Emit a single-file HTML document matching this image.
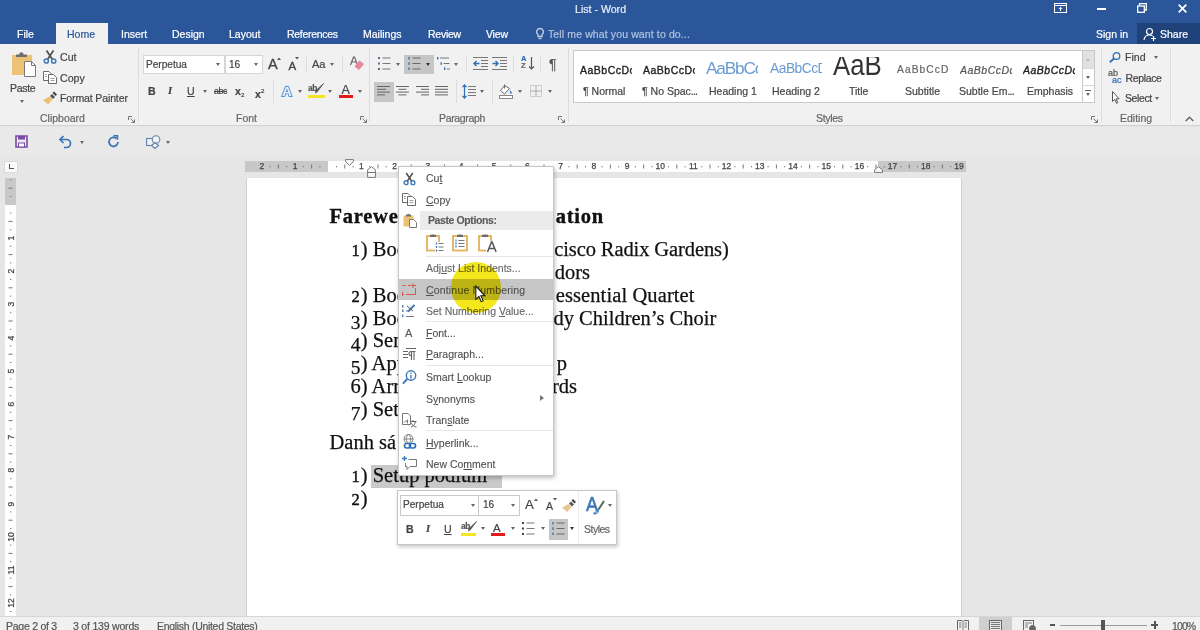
<!DOCTYPE html>
<html lang="en">
<head>
<meta charset="utf-8">
<title>List - Word</title>
<style>
*{box-sizing:border-box;margin:0;padding:0}
html,body{width:1200px;height:630px;overflow:hidden;background:#e6e6e6;font-family:"Liberation Sans",sans-serif;font-size:10.5px;color:#444}
#app{position:relative;width:1200px;height:630px;overflow:hidden;will-change:transform}
.a{position:absolute}
.t{position:absolute;white-space:nowrap;line-height:14px;-webkit-text-stroke:.2px currentColor}
svg{position:absolute;overflow:visible}
/* title + tabs */
#title{left:0;top:0;width:1200px;height:44px;background:#2b579a}
#title .t{color:#fff;font-size:10.5px}
#hometab{left:56px;top:23px;width:52px;height:22px;background:#f1f1f1}
#share{left:1137px;top:23px;width:63px;height:21px;background:#1e4279}
/* ribbon */
#ribbon{left:0;top:44px;width:1200px;height:82px;background:#f1f1f1;border-bottom:1px solid #d2d2d2}
.sep{position:absolute;width:1px;background:#dcdcdc}
.lbl{color:#666;font-size:10.5px}
.dd{position:absolute;width:0;height:0;margin-left:.5px;border-left:2.500px solid transparent;border-right:2.500px solid transparent;border-top:3px solid #666}
.hl{position:absolute;background:#c6c6c6}
.box{position:absolute;background:#fff;border:1px solid #c6c6c6}
/* doc */
#page{left:246px;top:178px;width:716px;height:439px;background:#fff;border-left:1px solid #d0d0d0;border-right:1px solid #d0d0d0}
.doc{position:absolute;white-space:nowrap;font-family:"Liberation Serif",serif;color:#111;font-size:20.5px;line-height:24px;-webkit-text-stroke:.25px #111}
#hr .rn{position:absolute;top:0;width:20px;text-align:center;font-size:8.500px;line-height:13px;color:#444;-webkit-text-stroke:.25px #444}
.vn{position:absolute;left:0px;width:21px;height:14px;text-align:center;font-size:8.500px;line-height:14px;color:#444;-webkit-text-stroke:.25px #444;transform:rotate(-90deg)}
.doc.r{left:auto}
.os{display:inline-block;width:10.250px;text-align:center}
.doc.b{font-weight:bold;font-size:20.5px;letter-spacing:.75px;-webkit-text-stroke:.35px #111}
/* status */
#status{left:0;top:615.500px;width:1200px;height:15px;background:#f1f1f1;border-top:1px solid #d6d6d6}
#status .t{color:#555;font-size:10.5px;top:2px}
/* menu */
#menu{left:398px;top:166px;width:156px;height:310px;background:#fff;border:1px solid #c6c6c6;box-shadow:1px 2px 4px rgba(0,0,0,.25)}
#menu .t{left:27px;color:#505050;font-size:10.5px;-webkit-text-stroke:.12px currentColor}
#menu .t u{text-decoration-thickness:1px;text-underline-offset:1px}
#menu .ms{position:absolute;left:27px;width:127px;height:1px;background:#e6e6e6}
#mini{left:397px;top:490px;width:220px;height:55px;background:#fff;border:1px solid #c6c6c6;box-shadow:1px 2px 4px rgba(0,0,0,.22)}
</style>
</head>
<body>
<div id="app">
<div id="title" class="a">
 <div class="t" style="left:575px;top:2px;font-size:10.6px;color:#e8eef7">List - Word</div>
 <div id="share" class="a"></div>
 <div id="hometab" class="a"></div>
 <div class="t" style="left:17px;top:27px">File</div>
 <div class="t" style="left:67px;top:27px;color:#2b579a">Home</div>
 <div class="t" style="left:121px;top:27px">Insert</div>
 <div class="t" style="left:172px;top:27px">Design</div>
 <div class="t" style="left:229px;top:27px">Layout</div>
 <div class="t" style="left:287px;top:27px;letter-spacing:-.3px">References</div>
 <div class="t" style="left:363px;top:27px">Mailings</div>
 <div class="t" style="left:428px;top:27px;letter-spacing:-.25px">Review</div>
 <div class="t" style="left:486px;top:27px;letter-spacing:-.2px">View</div>
 <div class="t" style="left:548px;top:27px;color:#b2c3df;font-size:10.5px;letter-spacing:.12px">Tell me what you want to do...</div>
 <div class="t" style="left:1096px;top:27px">Sign in</div>
 <div class="t" style="left:1160px;top:27px">Share</div>
 <svg style="left:533.500px;top:26.500px" width="12" height="15" viewBox="0 0 12 15" fill="none" stroke="#c3d0e6" stroke-width="1.300"><path d="M6 1.5a3.3 3.3 0 0 0-2 6v2h4v-2a3.3 3.3 0 0 0-2-6z"/><path d="M4.5 11.5h3"/></svg>
 <svg style="left:1143px;top:27px" width="15" height="15" viewBox="0 0 15 15" fill="none" stroke="#fff" stroke-width="1.2"><circle cx="6.5" cy="4.5" r="3"/><path d="M1 13c.5-3.5 2.5-5 5.5-5 1.2 0 2.2.3 3 .8"/><path d="M10.5 9v5M8 11.5h5"/></svg>
 <svg style="left:1054px;top:3px" width="13" height="10" viewBox="0 0 13 10" fill="none" stroke="#fff" stroke-width="1"><rect x=".5" y=".5" width="12" height="9"/><path d="M.5 2.5h12"/><path d="M6.5 8V4.5M4.8 6l1.7-1.7L8.2 6" /></svg>
 <div class="a" style="left:1097px;top:8px;width:9px;height:2px;background:#fff"></div>
 <svg style="left:1137px;top:3px" width="10" height="10" viewBox="0 0 10 10" fill="none" stroke="#fff" stroke-width="1.3"><path d="M2.5 2.5V.7h6.8v6.3H7.5"/><rect x=".7" y="3" width="6.6" height="6.3"/></svg>
 <svg style="left:1178px;top:4px" width="9" height="9" viewBox="0 0 9 9" fill="none" stroke="#fff" stroke-width="1.7"><path d="M.7.7l7.6 7.6M8.3.7L.7 8.3"/></svg>
</div>

<div id="ribbon" class="a">
 <!-- coordinates inside are relative to ribbon top=44 -->
 <!-- Clipboard -->
 <svg style="left:11px;top:7px" width="26" height="27" viewBox="0 0 26 27">
  <rect x="1" y="4" width="20" height="20" fill="#eec274"/>
  <path d="M5 6V3.5h3.2a2.2 2.2 0 0 1 4.400 0H16V6z" fill="#6e6e6e"/>
  <path d="M13.500 10.500h7l4 4V25.500h-11z" fill="#fff" stroke="#7a7a7a" stroke-width="1"/>
  <path d="M20.500 10.500v4h4" fill="none" stroke="#7a7a7a" stroke-width="1"/>
 </svg>
 <div class="t" style="left:10px;top:37px;font-size:10.5px;letter-spacing:-.3px">Paste</div>
 <div class="dd" style="left:19px;top:56px"></div>
 <svg style="left:43px;top:6px" width="14" height="14" viewBox="0 0 14 14" fill="none">
  <path d="M3.500 0.500L9.500 9.500M10.500 0.500L4.500 9.500" stroke="#505050" stroke-width="1.700"/>
  <circle cx="3.300" cy="11" r="2.100" stroke="#3f78b8" stroke-width="1.500"/><circle cx="10.700" cy="11" r="2.100" stroke="#3f78b8" stroke-width="1.500"/>
 </svg>
 <div class="t" style="left:60px;top:6px;font-size:10.6px">Cut</div>
 <svg style="left:43px;top:27px" width="14" height="13" viewBox="0 0 14 13" fill="#fff" stroke="#6a6a6a" stroke-width="1">
  <path d="M0.500 0.500h5.500l2 2v7h-7.500z"/><path d="M5.500 3.500h5l3 3v6h-8z"/><path d="M2 3.500h2M2 5.500h2M7.500 7.500h4M7.500 9.500h4" stroke="#8a8a8a" stroke-width=".8"/>
 </svg>
 <div class="t" style="left:60px;top:27px;font-size:10.6px">Copy</div>
 <svg style="left:43px;top:47px" width="15" height="14" viewBox="0 0 15 14">
  <path d="M9 3l3 3-2 2-3-3z" fill="#555"/><path d="M11 .5l3 3-1.500 1.500-3-3z" fill="#444"/>
  <path d="M6.500 5.500l3 3-4.500 5-5-4.500z" fill="#eec274"/>
 </svg>
 <div class="t" style="left:60px;top:47px;font-size:10.5px;letter-spacing:-.12px">Format Painter</div>
 <div class="t lbl" style="left:40px;top:67px">Clipboard</div>
 <svg class="lch" style="left:128px;top:72px" width="7" height="7" viewBox="0 0 7 7" fill="none" stroke="#777" stroke-width="1"><path d="M.5 4V.5H4"/><path d="M2.500 2.500l4 4M6.500 3.500v3h-3"/></svg>
 <div class="sep" style="left:138px;top:4px;height:74px"></div>
 <!-- Font -->
 <div class="box" style="left:143px;top:11px;width:82px;height:19px;border-color:#d6d6d6"></div>
 <div class="box" style="left:225px;top:11px;width:38px;height:19px;border-color:#d6d6d6"></div>
 <div class="t" style="left:146px;top:14px;font-size:10.1px">Perpetua</div>
 <div class="t" style="left:229px;top:14px;font-size:10.1px">16</div>
 <div class="dd" style="left:215px;top:19px"></div>
 <div class="dd" style="left:253px;top:19px"></div>
 <div class="t" style="left:268px;top:12px;font-size:14.500px;line-height:16px;-webkit-text-stroke:.35px #444">A</div>
 <svg style="left:277px;top:13px" width="4" height="3" viewBox="0 0 4 3"><path d="M0 3L2 .5 4 3z" fill="#555"/></svg>
 <div class="t" style="left:288.500px;top:14.500px;font-size:11.500px;line-height:14px;-webkit-text-stroke:.35px #444">A</div>
 <svg style="left:295px;top:13px" width="4" height="3" viewBox="0 0 4 3"><path d="M0 0L2 2.500 4 0z" fill="#555"/></svg>
 <div class="sep" style="left:306px;top:12px;height:17px"></div>
 <div class="t" style="left:312px;top:13px;font-size:11.0px">Aa</div>
 <div class="dd" style="left:329px;top:19px"></div>
 <div class="sep" style="left:342px;top:12px;height:17px"></div>
 <svg style="left:349px;top:12px" width="16" height="15" viewBox="0 0 16 15">
  <path d="M1.500 9L4.500 1h1L8.500 9M2.700 6h4.600" fill="none" stroke="#666" stroke-width="1.200"/>
  <path d="M10.500 4.500l4.500 3.500-5 6-4.500-3.500z" fill="#e8849c"/>
 </svg>
 <div class="t" style="left:148px;top:40px;font-size:10.6px;font-weight:bold;color:#444">B</div>
 <div class="t" style="left:168px;top:40px;font-size:10.6px;font-style:italic;font-weight:bold;font-family:'Liberation Serif',serif;color:#444">I</div>
 <div class="t" style="left:187px;top:40px;font-size:10.6px;text-decoration:underline;color:#444">U</div>
 <div class="dd" style="left:202px;top:46px"></div>
 <div class="t" style="left:214px;top:40px;font-size:8.8px;text-decoration:line-through;letter-spacing:-0.44px">abc</div>
 <div class="t" style="left:235px;top:40px;font-size:10.6px;font-weight:bold">x<span style="font-size:6.2px;vertical-align:-2px;font-weight:normal">2</span></div>
 <div class="t" style="left:255px;top:40px;font-size:10.6px;font-weight:bold">x<span style="font-size:6.2px;vertical-align:5px;font-weight:normal">2</span></div>
 <div class="sep" style="left:273px;top:36px;height:23px"></div>
 <div class="t" style="left:282px;top:38.500px;font-size:13.500px;line-height:18px;font-weight:bold;color:#eef4fb;-webkit-text-stroke:2px #5a93d6;paint-order:stroke fill">A</div>
 <div class="dd" style="left:297px;top:46px"></div>
 <div class="t" style="left:308px;top:37px;font-size:8.4px;font-weight:bold;letter-spacing:-0.35px;color:#555">ab</div>
 <svg style="left:314px;top:39px" width="11" height="11" viewBox="0 0 11 11"><path d="M9.500 0.500L3.500 8.500l-2 1.500.500-2.500z" fill="#555" stroke="#555" stroke-width=".8"/></svg>
 <div class="a" style="left:308px;top:51px;width:17px;height:3px;background:#f2e526"></div>
 <div class="dd" style="left:327px;top:46px"></div>
 <div class="t" style="left:341.500px;top:39px;font-size:12.500px;color:#444">A</div>
 <div class="a" style="left:339px;top:51px;width:14px;height:3px;background:#e21a1a"></div>
 <div class="dd" style="left:357px;top:46px"></div>
 <div class="t lbl" style="left:236px;top:67px">Font</div>
 <svg class="lch" style="left:360px;top:72px" width="7" height="7" viewBox="0 0 7 7" fill="none" stroke="#777" stroke-width="1"><path d="M.5 4V.5H4"/><path d="M2.500 2.500l4 4M6.500 3.500v3h-3"/></svg>
 <div class="sep" style="left:369px;top:4px;height:74px"></div>
 <!-- Paragraph row 1 (relative to top=44) -->
 <svg style="left:378px;top:13px" width="13" height="13" viewBox="0 0 13 13"><g fill="#5a6f8c"><rect x="0" y="0" width="2" height="2"/><rect x="0" y="5.500" width="2" height="2"/><rect x="0" y="11" width="2" height="2"/></g><path d="M4.500 1h8M4.500 6.500h8M4.500 12h8" stroke="#777" stroke-width="1"/></svg>
 <div class="dd" style="left:395px;top:19px"></div>
 <div class="hl" style="left:404px;top:11px;width:30px;height:19px"></div>
 <svg style="left:408px;top:13px" width="13" height="13" viewBox="0 0 13 13"><g fill="#3f6fae"><rect x=".3" y="0" width="1.400" height="2.500"/><rect x=".3" y="5.300" width="1.400" height="2.500"/><rect x=".3" y="10.500" width="1.400" height="2.500"/></g><path d="M4.500 1h8M4.500 6.500h8M4.500 12h8" stroke="#666" stroke-width="1"/></svg>
 <div class="dd" style="left:425px;top:19px;border-top-color:#333"></div>
 <svg style="left:437px;top:13px" width="15" height="14" viewBox="0 0 15 14"><g fill="#3f6fae"><rect x="0" y="0" width="1.400" height="2.500"/><rect x="3.500" y="5.300" width="1.400" height="2.500"/><rect x="7" y="10.500" width="1.400" height="2.500"/></g><path d="M3 1h9M6.500 6.500h6M10 12h3" stroke="#777" stroke-width="1"/></svg>
 <div class="dd" style="left:453px;top:19px"></div>
 <div class="sep" style="left:466px;top:12px;height:17px"></div>
 <svg style="left:473px;top:13px" width="15" height="13" viewBox="0 0 15 13"><path d="M0 .5h15M8 3.500h7M8 6.500h7M8 9.500h7M0 12.500h15" stroke="#777" stroke-width="1"/><path d="M6.500 6.500H1M3.500 4L1 6.500 3.500 9" fill="none" stroke="#2f6fb7" stroke-width="1.400"/></svg>
 <svg style="left:492px;top:13px" width="15" height="13" viewBox="0 0 15 13"><path d="M0 .5h15M8 3.500h7M8 6.500h7M8 9.500h7M0 12.500h15" stroke="#777" stroke-width="1"/><path d="M0.500 6.500H6M3.500 4L6 6.500 3.500 9" fill="none" stroke="#2f6fb7" stroke-width="1.400"/></svg>
 <div class="sep" style="left:513px;top:12px;height:17px"></div>
 <div class="t" style="left:521px;top:11px;font-size:7.5px;line-height:8px;color:#2f6fb7;font-weight:bold">A</div>
 <div class="t" style="left:521px;top:18px;font-size:7.5px;line-height:8px;color:#666;font-weight:bold">Z</div>
 <svg style="left:528px;top:13px" width="7" height="13" viewBox="0 0 7 13"><path d="M3.500 0V12M1 9.500L3.500 12 6 9.500" fill="none" stroke="#555" stroke-width="1.200"/></svg>
 <div class="sep" style="left:540px;top:12px;height:17px"></div>
 <div class="t" style="left:549px;top:12px;font-size:14px;line-height:16px;color:#555">¶</div>
 <!-- row 2 -->
 <div class="hl" style="left:374px;top:38px;width:20px;height:20px"></div>
 <svg style="left:377px;top:42px" width="14" height="10" viewBox="0 0 14 10"><path d="M0 .5h13M0 3.300h9M0 6.100h13M0 8.900h8" stroke="#666" stroke-width="1"/></svg>
 <svg style="left:396px;top:42px" width="14" height="10" viewBox="0 0 14 10"><path d="M0 .5h13M2.500 3.300h8M0 6.100h13M2.500 8.900h8" stroke="#666" stroke-width="1"/></svg>
 <svg style="left:416px;top:42px" width="14" height="10" viewBox="0 0 14 10"><path d="M0 .5h13M5 3.300h8M0 6.100h13M5 8.900h8" stroke="#666" stroke-width="1"/></svg>
 <svg style="left:435px;top:42px" width="14" height="10" viewBox="0 0 14 10"><path d="M0 .5h13M0 3.300h13M0 6.100h13M0 8.900h13" stroke="#666" stroke-width="1"/></svg>
 <div class="sep" style="left:456px;top:36px;height:23px"></div>
 <svg style="left:462px;top:40px" width="15" height="15" viewBox="0 0 15 15"><path d="M6 2.500h8M6 5.500h8M6 8.500h8M6 11.500h8" stroke="#777" stroke-width="1"/><path d="M2.500 1V14M.5 3.200L2.500 1l2 2.200M.5 11.800l2 2.200 2-2.200" fill="none" stroke="#2f6fb7" stroke-width="1.200"/></svg>
 <div class="dd" style="left:479px;top:46px"></div>
 <div class="sep" style="left:492px;top:36px;height:23px"></div>
 <svg style="left:499px;top:40px" width="15" height="15" viewBox="0 0 15 15"><path d="M5.500 1.500L1.500 6.500l4 3.500 5-5.500z" fill="#fff" stroke="#666" stroke-width="1"/><path d="M5.500 .5v4" stroke="#666" stroke-width="1"/><path d="M11 6c1.500 1.500 2.500 3 1 4-1.200-.5-1.500-2-1-4z" fill="#4a7fc0"/><rect x=".5" y="11.500" width="13" height="3" fill="#fff" stroke="#888" stroke-width="1"/></svg>
 <div class="dd" style="left:517px;top:46px"></div>
 <svg style="left:530px;top:41px" width="12" height="12" viewBox="0 0 12 12"><rect x=".5" y=".5" width="11" height="11" fill="none" stroke="#aaa" stroke-width="1" stroke-dasharray="1 1"/><path d="M6 .5v11M.5 6h11" stroke="#aaa" stroke-width="1"/></svg>
 <div class="dd" style="left:547px;top:46px"></div>
 <div class="t lbl" style="left:439px;top:67px;letter-spacing:-.35px">Paragraph</div>
 <svg class="lch" style="left:558px;top:72px" width="7" height="7" viewBox="0 0 7 7" fill="none" stroke="#777" stroke-width="1"><path d="M.5 4V.5H4"/><path d="M2.500 2.500l4 4M6.500 3.500v3h-3"/></svg>
 <div class="sep" style="left:568px;top:4px;height:74px"></div>
 <!-- Styles gallery (relative to top=44) -->
 <div class="box" style="left:573px;top:6px;width:522px;height:53px;border-color:#c9c9c9"></div>
 <div class="a" style="left:1082px;top:7px;width:12px;height:17px;background:#e1e1e1"></div>
 <div class="a" style="left:1082px;top:6px;width:1px;height:52px;background:#c9c9c9"></div>
 <div class="a" style="left:1082px;top:24px;width:12px;height:1px;background:#d8d8d8"></div>
 <div class="a" style="left:1082px;top:41px;width:12px;height:1px;background:#d8d8d8"></div>
 <div class="dd" style="left:1085px;top:14px;transform:rotate(180deg);border-top-color:#bbb"></div>
 <div class="dd" style="left:1085px;top:32px"></div>
 <div class="a" style="left:1085px;top:46px;width:6px;height:1px;background:#666"></div>
 <div class="dd" style="left:1085px;top:49px"></div>
 <div class="a" id="gal" style="left:574px;top:13px;width:508px;height:44px;overflow:hidden">
  <div class="a" style="left:6px;top:0;width:52px;height:44px;overflow:hidden"><div class="t" style="left:0;top:6px;font-size:10.5px;color:#222;-webkit-text-stroke:.35px #222;letter-spacing:.5px">AaBbCcDc</div></div>
  <div class="a" style="left:69px;top:0;width:52px;height:44px;overflow:hidden"><div class="t" style="left:0;top:6px;font-size:10.5px;color:#222;-webkit-text-stroke:.35px #222;letter-spacing:.5px">AaBbCcDc</div></div>
  <div class="a" style="left:132px;top:0;width:52px;height:44px;overflow:hidden"><div class="t" style="left:0;top:0px;font-size:17.2px;line-height:22px;color:#6a9bd0;-webkit-text-stroke:0;letter-spacing:-1.150px">AaBbCcD</div></div>
  <div class="a" style="left:196px;top:0;width:52px;height:44px;overflow:hidden"><div class="t" style="left:0;top:2.500px;font-size:13.8px;line-height:18px;color:#6a9bd0;-webkit-text-stroke:0;letter-spacing:-.5px">AaBbCcDc</div></div>
  <div class="a" style="left:259px;top:0;width:52px;height:44px;overflow:hidden"><div class="t" style="left:0;top:-11.600px;font-size:29px;line-height:40px;color:#333;-webkit-text-stroke:0;transform:scaleX(.89);transform-origin:0 0">AaB</div></div>
  <div class="a" style="left:323px;top:0;width:52px;height:44px;overflow:hidden"><div class="t" style="left:0;top:6px;font-size:10.2px;color:#666;letter-spacing:1.1px">AaBbCcDc</div></div>
  <div class="a" style="left:386px;top:0;width:52px;height:44px;overflow:hidden"><div class="t" style="left:0;top:6px;font-size:10.5px;color:#555;font-style:italic;letter-spacing:.5px">AaBbCcDc</div></div>
  <div class="a" style="left:449px;top:0;width:52px;height:44px;overflow:hidden"><div class="t" style="left:0;top:6px;font-size:10.5px;color:#222;font-style:italic;-webkit-text-stroke:.35px #222;letter-spacing:.5px">AaBbCcDc</div></div>
 </div>
 <div class="t" style="left:583px;top:40px">¶ Normal</div>
 <div class="t" style="left:642px;top:40px">¶ No Spac<span style="letter-spacing:-.8px">...</span></div>
 <div class="t" style="left:709px;top:40px">Heading 1</div>
 <div class="t" style="left:772px;top:40px">Heading 2</div>
 <div class="t" style="left:849px;top:40px">Title</div>
 <div class="t" style="left:905px;top:40px">Subtitle</div>
 <div class="t" style="left:959px;top:40px">Subtle Em<span style="letter-spacing:-.8px">...</span></div>
 <div class="t" style="left:1027px;top:40px">Emphasis</div>
 <div class="t lbl" style="left:816px;top:67px;letter-spacing:-.3px">Styles</div>
 <svg class="lch" style="left:1091px;top:72px" width="7" height="7" viewBox="0 0 7 7" fill="none" stroke="#777" stroke-width="1"><path d="M.5 4V.5H4"/><path d="M2.500 2.500l4 4M6.500 3.500v3h-3"/></svg>
 <div class="sep" style="left:1101px;top:4px;height:74px"></div>
 <!-- Editing -->
 <svg style="left:1109px;top:8px" width="12" height="11" viewBox="0 0 12 11" fill="none" stroke="#2f6fb7"><circle cx="7.500" cy="4" r="3.300" stroke-width="1.300"/><path d="M5 6.500L.8 10.200" stroke-width="1.800"/></svg>
 <div class="t" style="left:1125px;top:6px;font-size:10.6px">Find</div>
 <div class="dd" style="left:1153px;top:12px"></div>
 <div class="t" style="left:1108px;top:25px;font-size:9px;line-height:9px;color:#555">ab</div>
 <div class="t" style="left:1112px;top:32px;font-size:9px;line-height:9px;color:#2f6fb7">ac</div>
 <div class="t" style="left:1125.500px;top:27px;font-size:10.5px;letter-spacing:-.35px">Replace</div>
 <svg style="left:1112px;top:47px" width="8" height="13" viewBox="0 0 8 13"><path d="M.5.5v10l2.300-2.200 1.700 4 1.300-.6-1.700-3.900h3z" fill="#fff" stroke="#555" stroke-width="1"/></svg>
 <div class="t" style="left:1125px;top:47px;font-size:10.5px;letter-spacing:-.4px">Select</div>
 <div class="dd" style="left:1154.500px;top:53px"></div>
 <div class="t lbl" style="left:1120px;top:67px">Editing</div>
 <div class="sep" style="left:1170px;top:4px;height:74px"></div>
 <svg style="left:1185px;top:72px" width="9" height="6" viewBox="0 0 9 6"><path d="M.7 5L4.500 1.200 8.300 5" fill="none" stroke="#666" stroke-width="1.500"/></svg>


</div>

<!-- QAT -->
<div class="a" style="left:0;top:127px;width:1200px;height:29px;background:#e9e9e9"></div>
<svg style="left:15px;top:135px" width="13" height="13" viewBox="0 0 13 13"><path d="M1 1h11v11H1z" fill="none" stroke="#7b4aa6" stroke-width="1.600"/><rect x="3" y="1" width="7" height="3.500" fill="#7b4aa6"/><rect x="3.500" y="8" width="6" height="4" fill="#fff" stroke="#7b4aa6" stroke-width="1"/></svg>
<svg style="left:58px;top:135px" width="15" height="13" viewBox="0 0 15 13" fill="none" stroke="#3a72b8" stroke-width="1.700"><path d="M2 4.500h6.500a4 4 0 0 1 0 8H6"/><path d="M5.500 1L2 4.500 5.500 8"/></svg>
<div class="dd" style="left:79px;top:141px"></div>
<svg style="left:107px;top:135px" width="13" height="13" viewBox="0 0 13 13" fill="none" stroke="#3a72b8" stroke-width="1.700"><path d="M9.500 3.500A4.500 4.500 0 1 0 11 7"/><path d="M6.500 .8h4v4" stroke-width="1.500"/></svg>
<svg style="left:146px;top:135px" width="16" height="14" viewBox="0 0 16 14" fill="#f3f3f3" stroke="#5d7fa8" stroke-width="1.100"><rect x=".6" y="3.500" width="8" height="7"/><circle cx="10" cy="4.500" r="3.800"/><path d="M9 7.500l3.500 3-3.500 3-3.500-3z"/></svg>
<div class="dd" style="left:165px;top:141px"></div>
<!-- horizontal ruler -->
<div class="a" style="left:245px;top:161px;width:721px;height:11px;background:#c8c8c8"></div>
<div class="a" style="left:328px;top:161px;width:550px;height:11px;background:#fefefe"></div>
<svg style="left:245px;top:161px" width="721" height="11" fill="#777"><rect x="24.6" y="5" width="1" height="1.300"/><rect x="32.9" y="3.500" width="1" height="4"/><rect x="41.2" y="5" width="1" height="1.300"/><rect x="57.8" y="5" width="1" height="1.300"/><rect x="66.1" y="3.500" width="1" height="4"/><rect x="74.4" y="5" width="1" height="1.300"/><rect x="91.0" y="5" width="1" height="1.300"/><rect x="99.3" y="3.500" width="1" height="4"/><rect x="107.6" y="5" width="1" height="1.300"/><rect x="124.2" y="5" width="1" height="1.300"/><rect x="132.5" y="3.500" width="1" height="4"/><rect x="140.8" y="5" width="1" height="1.300"/><rect x="157.4" y="5" width="1" height="1.300"/><rect x="165.7" y="3.500" width="1" height="4"/><rect x="174.0" y="5" width="1" height="1.300"/><rect x="190.6" y="5" width="1" height="1.300"/><rect x="198.9" y="3.500" width="1" height="4"/><rect x="207.2" y="5" width="1" height="1.300"/><rect x="223.8" y="5" width="1" height="1.300"/><rect x="232.1" y="3.500" width="1" height="4"/><rect x="240.4" y="5" width="1" height="1.300"/><rect x="257.0" y="5" width="1" height="1.300"/><rect x="265.3" y="3.500" width="1" height="4"/><rect x="273.6" y="5" width="1" height="1.300"/><rect x="290.2" y="5" width="1" height="1.300"/><rect x="298.5" y="3.500" width="1" height="4"/><rect x="306.8" y="5" width="1" height="1.300"/><rect x="323.4" y="5" width="1" height="1.300"/><rect x="331.7" y="3.500" width="1" height="4"/><rect x="340.0" y="5" width="1" height="1.300"/><rect x="356.6" y="5" width="1" height="1.300"/><rect x="364.9" y="3.500" width="1" height="4"/><rect x="373.2" y="5" width="1" height="1.300"/><rect x="389.8" y="5" width="1" height="1.300"/><rect x="398.1" y="3.500" width="1" height="4"/><rect x="406.4" y="5" width="1" height="1.300"/><rect x="423.0" y="5" width="1" height="1.300"/><rect x="431.3" y="3.500" width="1" height="4"/><rect x="439.6" y="5" width="1" height="1.300"/><rect x="456.2" y="5" width="1" height="1.300"/><rect x="464.5" y="3.500" width="1" height="4"/><rect x="472.8" y="5" width="1" height="1.300"/><rect x="489.4" y="5" width="1" height="1.300"/><rect x="497.7" y="3.500" width="1" height="4"/><rect x="506.0" y="5" width="1" height="1.300"/><rect x="522.6" y="5" width="1" height="1.300"/><rect x="530.9" y="3.500" width="1" height="4"/><rect x="539.2" y="5" width="1" height="1.300"/><rect x="555.8" y="5" width="1" height="1.300"/><rect x="564.1" y="3.500" width="1" height="4"/><rect x="572.4" y="5" width="1" height="1.300"/><rect x="589.0" y="5" width="1" height="1.300"/><rect x="597.3" y="3.500" width="1" height="4"/><rect x="605.6" y="5" width="1" height="1.300"/><rect x="622.2" y="5" width="1" height="1.300"/><rect x="630.5" y="3.500" width="1" height="4"/><rect x="638.8" y="5" width="1" height="1.300"/><rect x="655.4" y="5" width="1" height="1.300"/><rect x="663.7" y="3.500" width="1" height="4"/><rect x="672.0" y="5" width="1" height="1.300"/><rect x="688.6" y="5" width="1" height="1.300"/><rect x="696.9" y="3.500" width="1" height="4"/><rect x="705.2" y="5" width="1" height="1.300"/></svg>
<div class="a" id="hr" style="left:0;top:160px;width:1200px;height:13px"><div class="rn" style="left:251.8px">2</div><div class="rn" style="left:285.0px">1</div><div class="rn" style="left:351.4px">1</div><div class="rn" style="left:384.6px">2</div><div class="rn" style="left:417.8px">3</div><div class="rn" style="left:451.0px">4</div><div class="rn" style="left:484.2px">5</div><div class="rn" style="left:517.4px">6</div><div class="rn" style="left:550.6px">7</div><div class="rn" style="left:583.8px">8</div><div class="rn" style="left:617.0px">9</div><div class="rn" style="left:650.2px">10</div><div class="rn" style="left:683.4px">11</div><div class="rn" style="left:716.6px">12</div><div class="rn" style="left:749.8px">13</div><div class="rn" style="left:783.0px">14</div><div class="rn" style="left:816.2px">15</div><div class="rn" style="left:849.4px">16</div><div class="rn" style="left:882.6px">17</div><div class="rn" style="left:915.8px">18</div><div class="rn" style="left:949.0px">19</div></div>
<svg style="left:344.500px;top:159px" width="9" height="7" viewBox="0 0 9 7"><path d="M.6.6h7.800v2L4.500 6.400.6 2.600z" fill="#fbfbfb" stroke="#777" stroke-width="1"/></svg>
<svg style="left:367px;top:166px" width="9" height="12" viewBox="0 0 9 12"><path d="M.6 11.400V3.800L4.500.6l3.900 3.200v7.600z" fill="#fbfbfb" stroke="#777" stroke-width="1"/><path d="M.6 6.500h7.800" stroke="#777"/></svg>
<svg style="left:873.500px;top:165.500px" width="9" height="7" viewBox="0 0 9 7"><path d="M.6 6.400V3.800L4.500.6l3.900 3.200v2.600z" fill="#fbfbfb" stroke="#777" stroke-width="1"/></svg>
<div class="a" style="left:4px;top:161px;width:14px;height:12px;background:#fbfbfb;border:1px solid #d9d9d9"></div>
<div class="a" style="left:9px;top:164px;width:5px;height:5px;border-left:1.500px solid #555;border-bottom:1.500px solid #555"></div>
<div class="a" style="left:5px;top:178px;width:11px;height:439px;background:#fefefe"></div>
<div class="a" style="left:5px;top:178px;width:11px;height:26.8px;background:#c8c8c8"></div>
<svg style="left:5px;top:178px" width="11" height="439" fill="#777"><rect y="1.4" x="5" width="1.300" height="1"/><rect y="9.7" x="3.500" width="4" height="1"/><rect y="18.0" x="5" width="1.300" height="1"/><rect y="34.6" x="5" width="1.300" height="1"/><rect y="42.9" x="3.500" width="4" height="1"/><rect y="51.2" x="5" width="1.300" height="1"/><rect y="67.8" x="5" width="1.300" height="1"/><rect y="76.1" x="3.500" width="4" height="1"/><rect y="84.4" x="5" width="1.300" height="1"/><rect y="101.0" x="5" width="1.300" height="1"/><rect y="109.3" x="3.500" width="4" height="1"/><rect y="117.6" x="5" width="1.300" height="1"/><rect y="134.2" x="5" width="1.300" height="1"/><rect y="142.5" x="3.500" width="4" height="1"/><rect y="150.8" x="5" width="1.300" height="1"/><rect y="167.4" x="5" width="1.300" height="1"/><rect y="175.7" x="3.500" width="4" height="1"/><rect y="184.0" x="5" width="1.300" height="1"/><rect y="200.6" x="5" width="1.300" height="1"/><rect y="208.9" x="3.500" width="4" height="1"/><rect y="217.2" x="5" width="1.300" height="1"/><rect y="233.8" x="5" width="1.300" height="1"/><rect y="242.1" x="3.500" width="4" height="1"/><rect y="250.4" x="5" width="1.300" height="1"/><rect y="267.0" x="5" width="1.300" height="1"/><rect y="275.3" x="3.500" width="4" height="1"/><rect y="283.6" x="5" width="1.300" height="1"/><rect y="300.2" x="5" width="1.300" height="1"/><rect y="308.5" x="3.500" width="4" height="1"/><rect y="316.8" x="5" width="1.300" height="1"/><rect y="333.4" x="5" width="1.300" height="1"/><rect y="341.7" x="3.500" width="4" height="1"/><rect y="350.0" x="5" width="1.300" height="1"/><rect y="366.6" x="5" width="1.300" height="1"/><rect y="374.9" x="3.500" width="4" height="1"/><rect y="383.2" x="5" width="1.300" height="1"/><rect y="399.8" x="5" width="1.300" height="1"/><rect y="408.1" x="3.500" width="4" height="1"/><rect y="416.4" x="5" width="1.300" height="1"/><rect y="433.0" x="5" width="1.300" height="1"/></svg>
<div class="vn" style="top:231.0px">1</div><div class="vn" style="top:264.2px">2</div><div class="vn" style="top:297.4px">3</div><div class="vn" style="top:330.6px">4</div><div class="vn" style="top:363.8px">5</div><div class="vn" style="top:397.0px">6</div><div class="vn" style="top:430.2px">7</div><div class="vn" style="top:463.4px">8</div><div class="vn" style="top:496.6px">9</div><div class="vn" style="top:529.8px">10</div><div class="vn" style="top:563.0px">11</div><div class="vn" style="top:596.2px">12</div>

<div id="page" class="a"></div>
<div class="a" style="left:371px;top:465px;width:130.500px;height:22.500px;background:#c9c9c9"></div>
<div class="doc b" style="left:329.500px;top:203.800px">Farewell</div>
<div class="doc b r" style="right:596.200px;top:203.800px">ation</div>
<div class="doc" style="left:350.500px;top:236.800px"><span class="os" style="font-size:16.500px;letter-spacing:0;-webkit-text-stroke:.45px #111">1</span>) Book</div><div class="doc r" style="right:471.300px;top:236.800px;letter-spacing:-.1px">cisco Radix Gardens)</div>
<div class="doc r" style="right:610px;top:259.700px">dors</div>
<div class="doc" style="left:350.500px;top:282.600px"><span class="os" style="font-size:16.500px;letter-spacing:0;-webkit-text-stroke:.45px #111">2</span>) Book</div><div class="doc r" style="right:505.400px;top:282.600px;letter-spacing:.1px">essential Quartet</div>
<div class="doc" style="left:350.500px;top:305.500px"><span class="os" style="position:relative;top:4px;font-size:19.500px">3</span>) Book</div><div class="doc r" style="right:483.700px;top:305.500px">dy Children’s Choir</div>
<div class="doc" style="left:350.500px;top:328.400px"><span class="os" style="position:relative;top:4px;font-size:19.500px">4</span>) Send</div>
<div class="doc" style="left:350.500px;top:351.300px"><span class="os" style="position:relative;top:4px;font-size:19.500px">5</span>) App</div><div class="doc r" style="right:633px;top:351.300px">p</div>
<div class="doc" style="left:350.500px;top:374.200px"><span class="os">6</span>) Arr</div><div class="doc r" style="right:623px;top:374.200px">rds</div>
<div class="doc" style="left:350.500px;top:397.100px"><span class="os" style="position:relative;top:4px;font-size:19.500px">7</span>) Set</div>
<div class="doc" style="left:329.500px;top:430px">Danh sá</div>
<div class="doc" style="left:350.500px;top:463.100px"><span class="os" style="font-size:16.500px;letter-spacing:0;-webkit-text-stroke:.45px #111">1</span>) Setup podium</div>
<div class="doc" style="left:350.500px;top:486px"><span class="os" style="font-size:16.500px;letter-spacing:0;-webkit-text-stroke:.45px #111">2</span>)</div>

<div id="status" class="a">
 <div class="t" style="left:6px;letter-spacing:-.25px">Page 2 of 3</div>
 <div class="t" style="left:73px;letter-spacing:-.2px">3 of 139 words</div>
 <div class="t" style="left:157px;letter-spacing:-.3px">English (United States)</div>
 <div class="hl" style="left:979px;top:0;width:33px;height:14px;background:#cfcfcf"></div>
 <svg style="left:957px;top:3px" width="12" height="11" viewBox="0 0 12 11" fill="none" stroke="#666" stroke-width="1"><path d="M.5.5h4.500l1 1 1-1h4.500v10H7l-1 .5-1-.5H.5z"/><path d="M6 1.500v9M2 3h2.500M2 5h2.500M2 7h2.500M7.500 3H10M7.500 5H10M7.500 7H10" stroke-width=".8"/></svg>
 <svg style="left:989px;top:3px" width="13" height="11" viewBox="0 0 13 11" fill="none" stroke="#666" stroke-width="1"><rect x=".5" y=".5" width="12" height="11" fill="#e8e8e8"/><path d="M2 2.500h9M2 4.500h9M2 6.500h9M2 8.500h9M2 10.500h9" stroke="#777" stroke-width="1"/></svg>
 <svg style="left:1023px;top:3px" width="13" height="11" viewBox="0 0 13 11" fill="none" stroke="#666" stroke-width="1"><rect x=".5" y=".5" width="10" height="11"/><path d="M2 3h7M2 5h3M2 7h3" stroke-width=".8"/><circle cx="9.500" cy="8.500" r="3" fill="#666"/></svg>
 <div class="a" style="left:1050px;top:7px;width:5px;height:2px;background:#555"></div>
 <div class="a" style="left:1060px;top:8px;width:87px;height:1px;background:#9a9a9a"></div>
 <div class="a" style="left:1101px;top:3px;width:4px;height:10px;background:#555"></div>
 <div class="a" style="left:1151px;top:7px;width:7px;height:2px;background:#555"></div>
 <div class="a" style="left:1153.500px;top:4px;width:2px;height:8px;background:#555"></div>
 <div class="t" style="left:1172px;letter-spacing:-.9px;font-size:10.5px">100%</div>
</div>

<div id="menu" class="a">
 <!-- relative to (398,166) incl 1px border => content origin (399,167) -->
 <div class="hl" style="left:21px;top:44px;width:133px;height:19px;background:#ebebeb"></div>
 <div class="hl" style="left:0;top:112px;width:154px;height:21px;background:#c6c6c6"></div>
 <div class="ms" style="top:89px"></div>
 <div class="ms" style="top:154px"></div>
 <div class="ms" style="top:198px"></div>
 <div class="ms" style="top:263px"></div>
 <div class="t" style="top:4px">Cu<u>t</u></div>
 <div class="t" style="top:26px"><u>C</u>opy</div>
 <div class="t" style="top:46px;left:29px;font-weight:bold;color:#5a5a5a;letter-spacing:-.4px">Paste Options:</div>
 <div class="t" style="top:94px;color:#666">Adj<u>u</u>st List Indents...</div>
 <div class="t" style="top:116px;letter-spacing:.17px"><u>C</u>ontinue Numbering</div>
 <div class="t" style="top:137px;color:#666">Set Numbering <u>V</u>alue...</div>
 <div class="t" style="top:159px"><u>F</u>ont...</div>
 <div class="t" style="top:180px"><u>P</u>aragraph...</div>
 <div class="t" style="top:203px">Smart <u>L</u>ookup</div>
 <div class="t" style="top:225px">S<u>y</u>nonyms</div>
 <div class="t" style="top:246px">Tran<u>s</u>late</div>
 <div class="t" style="top:269px"><u>H</u>yperlink...</div>
 <div class="t" style="top:290px">New Co<u>m</u>ment</div>
 <div class="a" style="left:141px;top:228px;width:0;height:0;border-top:3.500px solid transparent;border-bottom:3.500px solid transparent;border-left:4px solid #777"></div>
 <!-- menu icons (relative to content origin 399,167) -->
 <svg style="left:4px;top:5px" width="13" height="14" viewBox="0 0 14 14" fill="none">
  <path d="M3.500 0.500L9.500 9.500M10.500 0.500L4.500 9.500" stroke="#505050" stroke-width="1.700"/>
  <circle cx="3.300" cy="11" r="2.100" stroke="#3f78b8" stroke-width="1.500"/><circle cx="10.700" cy="11" r="2.100" stroke="#3f78b8" stroke-width="1.500"/>
 </svg>
 <svg style="left:3px;top:26px" width="14" height="13" viewBox="0 0 14 13" fill="#fff" stroke="#6a6a6a" stroke-width="1">
  <path d="M0.500 0.500h5.500l2 2v7h-7.500z"/><path d="M5.500 3.500h5l3 3v6h-8z"/><path d="M2 3.500h2M2 5.500h2M7.500 7.500h4M7.500 9.500h4" stroke="#8a8a8a" stroke-width=".8"/>
 </svg>
 <svg style="left:4px;top:46px" width="14" height="15" viewBox="0 0 14 15">
  <rect x=".5" y="2.500" width="10" height="11" fill="#eec274"/><path d="M3 3.500V1.500h1.500a1.200 1.200 0 0 1 2 0H8v2z" fill="#6e6e6e"/>
  <path d="M6.500 6.500h4l3 3v5h-7z" fill="#fff" stroke="#7a7a7a" stroke-width="1"/>
 </svg>
 <!-- paste option icons -->
 <svg style="left:27px;top:66px" width="19" height="20" viewBox="0 0 19 20">
  <rect x="1" y="3" width="12" height="14.500" fill="#fff" stroke="#e3b05c" stroke-width="1.800"/><path d="M4 4V1.800h2a1.300 1.300 0 0 1 2.200 0H10V4z" fill="#6e6e6e"/>
  <rect x="9" y="9" width="10" height="11" fill="#fff"/><path d="M12.500 10.500h5M12.500 14h5M12.500 17.500h5" stroke="#777" stroke-width="1"/><path d="M10.500 9.500v2M10.500 13v2M10.500 16.500v2" stroke="#3f6fae" stroke-width="1.200"/>
 </svg>
 <svg style="left:53px;top:66px" width="16" height="20" viewBox="0 0 16 20">
  <rect x="1" y="3" width="14" height="14.500" fill="#fff" stroke="#e3b05c" stroke-width="1.800"/><path d="M5 4V1.800h2a1.300 1.300 0 0 1 2.200 0H11V4z" fill="#6e6e6e"/>
  <path d="M6.500 7.500h6M6.500 10.500h6M6.500 13.500h6" stroke="#777" stroke-width="1"/><path d="M4 6.500v2M4 9.500v2M4 12.500v2" stroke="#3f6fae" stroke-width="1.200"/>
 </svg>
 <svg style="left:79px;top:66px" width="19" height="20" viewBox="0 0 19 20">
  <rect x="1" y="3" width="12" height="14.500" fill="#fff" stroke="#e3b05c" stroke-width="1.800"/><path d="M4 4V1.800h2a1.300 1.300 0 0 1 2.200 0H10V4z" fill="#6e6e6e"/>
  <rect x="8" y="8" width="11" height="12" fill="#fff"/><path d="M9.500 19l4-10h.6l4 10M11 15.500h5.600" fill="none" stroke="#555" stroke-width="1.500"/>
 </svg>
 <!-- continue numbering -->
 <svg style="left:3px;top:116px" width="15" height="14" viewBox="0 0 15 14" fill="none" stroke="#d4574e" stroke-width="1"><path d="M.5 2.500h3M6 2.500h3M11 .5v4.500M9.500 2.500h4.500M13.500 5v6.500H4M.5 9v4M.5 11.500h1.500"/></svg>
 <svg style="left:3px;top:137px" width="14" height="14" viewBox="0 0 14 14" fill="none"><path d="M.8 1v2.500M.8 5.500v2.500M.8 10.500v2.500" stroke="#3f6fae" stroke-width="1.300"/><path d="M4 12.500h8M4 7h3" stroke="#777" stroke-width="1"/><path d="M12.500 1L6 7.500" stroke="#3f78b8" stroke-width="2"/><path d="M5 2l6 5" stroke="#555" stroke-width="1"/></svg>
 <div class="t" style="left:6px;top:159px;font-size:11.0px;color:#555">A</div>
 <svg style="left:4px;top:181px" width="13" height="12" viewBox="0 0 13 12" fill="none" stroke="#666" stroke-width="1"><path d="M3 .5h10M0 3.500h5M0 6.500h5M0 9.500h5"/><path d="M8.500 3.500v8.500M11 3.500v8.500M12.500 3.500H8a2 2 0 0 0 0 4" stroke-width="1.100"/></svg>
 <svg style="left:3px;top:203px" width="15" height="15" viewBox="0 0 15 15" fill="none" stroke="#3f78b8"><circle cx="9" cy="5.500" r="4.700" stroke-width="1.400"/><path d="M5.300 9L.9 13.600" stroke-width="2"/><path d="M9 5v3.500M9 2.800v1.200" stroke-width="1.400"/></svg>
 <svg style="left:3px;top:246px" width="15" height="15" viewBox="0 0 15 15" fill="none" stroke="#777" stroke-width="1"><path d="M.5.5h5.500l2.500 2.500v8.500h-8z"/><path d="M2.500 9.500c0-2 3-2 3 0M5.500 6.500v4" /><path d="M8 8.500h6.500M11 7v1.500M9 14c3-1 4-3 4.500-5.500M9 10c1 2 3 3.500 5.500 4" stroke="#666"/></svg>
 <svg style="left:3px;top:267px" width="15" height="16" viewBox="0 0 15 16" fill="none"><circle cx="6.500" cy="5" r="4.500" stroke="#777" stroke-width="1"/><path d="M2 5h9M6.500 .5c-3 3-3 6 0 9M6.500 .5c3 3 3 6 0 9" stroke="#777" stroke-width=".9"/><rect x="2.500" y="9.500" width="6" height="4.500" rx="2.200" stroke="#2f6fb7" stroke-width="1.700"/><rect x="7.500" y="9.500" width="6" height="4.500" rx="2.200" stroke="#2f6fb7" stroke-width="1.700"/></svg>
 <svg style="left:3px;top:289px" width="15" height="15" viewBox="0 0 15 15" fill="none"><path d="M6.500 3.500h8v7H8l-3 3v-3H3.500V7" stroke="#777" stroke-width="1"/><path d="M2.500 0v5M0 2.500h5" stroke="#3f78b8" stroke-width="1.300"/></svg>

</div>
<div class="a" style="left:450.500px;top:262px;width:50.500px;height:50.500px;border-radius:50%;background:#f4e60e;mix-blend-mode:multiply;opacity:.95"></div>
<svg style="left:474.800px;top:285.300px" width="11" height="18" viewBox="0 0 13 21"><path d="M1 1.200v15.600l3.600-3.400 2.700 6.200 2.300-1-2.700-6h4.900z" fill="#fff" stroke="#111" stroke-width="1.200" stroke-linejoin="miter"/></svg>

<div id="mini" class="a">
 <!-- content origin (398,491) -->
 <div class="box" style="left:2px;top:4px;width:79px;height:21px;border-color:#c9c9c9"></div>
 <div class="box" style="left:80px;top:4px;width:42px;height:21px;border-color:#c9c9c9"></div>
 <div class="t" style="left:5px;top:7px;font-size:10.1px">Perpetua</div>
 <div class="t" style="left:85px;top:7px;font-size:10.1px">16</div>
 <div class="dd" style="left:72px;top:13px"></div>
 <div class="dd" style="left:112px;top:13px"></div>
 <div class="t" style="left:127px;top:6px;font-size:13.2px;line-height:16px">A</div>
 <svg style="left:136px;top:7px" width="4" height="3" viewBox="0 0 4 3"><path d="M0 3L2 .5 4 3z" fill="#555"/></svg>
 <div class="t" style="left:148px;top:8px;font-size:10.6px;line-height:14px">A</div>
 <svg style="left:155px;top:7px" width="4" height="3" viewBox="0 0 4 3"><path d="M0 0L2 2.500 4 0z" fill="#555"/></svg>
 <svg style="left:164px;top:7px" width="15" height="15" viewBox="0 0 15 14">
  <path d="M9 3l3 3-2 2-3-3z" fill="#555"/><path d="M11 .5l3 3-1.500 1.500-3-3z" fill="#444"/>
  <path d="M6.500 5.500l3 3-4.500 5-5-4.500z" fill="#e6c78f"/>
 </svg>
 <div class="sep" style="left:180px;top:0;height:53px;background:#ebebeb"></div>
 <div class="t" style="left:187.500px;top:.3px;font-size:21px;line-height:26px;color:#3f78b8;-webkit-text-stroke:.6px #3f78b8;transform:scaleX(.86);transform-origin:0 0">A</div>
 <svg style="left:194px;top:9px" width="14" height="16" viewBox="0 0 14 16"><path d="M12 1L6.500 9.500" stroke="#5a6a50" stroke-width="2"/><path d="M6.800 9c-2.500-.5-3 2-6 5 3.500 1.500 7-1 6-5z" fill="#4a86c8"/><path d="M3.500 11.500l2 1.500" stroke="#fff" stroke-width="1"/></svg>
 <div class="dd" style="left:209px;top:13px"></div>
 <div class="t" style="left:186px;top:31px;font-size:10.5px;color:#666;letter-spacing:-.5px">Styles</div>
 <div class="t" style="left:8px;top:31px;font-size:10.6px;font-weight:bold">B</div>
 <div class="t" style="left:28px;top:31px;font-size:10.6px;font-style:italic;font-weight:bold;font-family:'Liberation Serif',serif">I</div>
 <div class="t" style="left:46px;top:31px;font-size:10.6px;text-decoration:underline">U</div>
 <div class="t" style="left:63px;top:28px;font-size:8.4px;font-weight:bold;letter-spacing:-0.35px;color:#555">ab</div>
 <svg style="left:69px;top:30px" width="11" height="11" viewBox="0 0 11 11"><path d="M9.500 0.500L3.500 8.500l-2 1.500.500-2.500z" fill="#555" stroke="#555" stroke-width=".8"/></svg>
 <div class="a" style="left:63px;top:42px;width:15px;height:3px;background:#f2e526"></div>
 <div class="dd" style="left:82px;top:36px"></div>
 <div class="t" style="left:95px;top:30px;font-size:11.4px">A</div>
 <div class="a" style="left:93px;top:42px;width:14px;height:3px;background:#e21a1a"></div>
 <div class="dd" style="left:112px;top:36px"></div>
 <svg style="left:124px;top:31px" width="13" height="13" viewBox="0 0 13 13"><g fill="#444"><rect x="0" y="0" width="2" height="2"/><rect x="0" y="5.500" width="2" height="2"/><rect x="0" y="11" width="2" height="2"/></g><path d="M4.500 1h8M4.500 6.500h8M4.500 12h8" stroke="#777" stroke-width="1"/></svg>
 <div class="dd" style="left:142px;top:36px"></div>
 <div class="hl" style="left:151px;top:28px;width:19px;height:21px"></div>
 <svg style="left:154px;top:31px" width="13" height="13" viewBox="0 0 13 13"><g fill="#3f6fae"><rect x=".3" y="0" width="1.400" height="2.500"/><rect x=".3" y="5.300" width="1.400" height="2.500"/><rect x=".3" y="10.500" width="1.400" height="2.500"/></g><path d="M4.500 1h8M4.500 6.500h8M4.500 12h8" stroke="#666" stroke-width="1"/></svg>
 <div class="dd" style="left:171px;top:36px;border-top-color:#333"></div>
</div>

</div>
</body>
</html>
